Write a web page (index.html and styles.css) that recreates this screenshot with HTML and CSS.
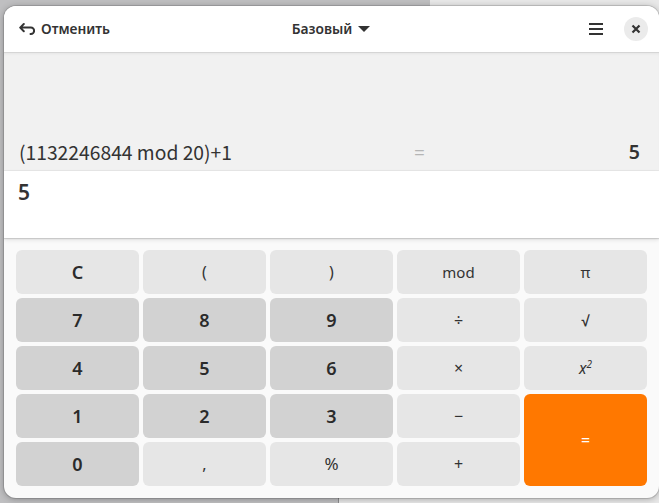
FILE: index.html
```
<!DOCTYPE html>
<html lang="ru">
<head>
<meta charset="utf-8">
<title>Калькулятор</title>
<link rel="stylesheet" href="styles.css">
</head>
<body>
<main class="window">
  <header class="header">
    <button class="undo">
      <svg width="16" height="14" viewBox="0 0 16 14"><path d="M4.8 2 1.2 5.6l3.6 3.6M1.8 5.6h10.1a3 3 0 0 1 0 6.4H11.5" fill="none" stroke="currentColor" stroke-width="2" stroke-linecap="round" stroke-linejoin="round"/></svg>
      <span>Отменить</span>
    </button>
    <button class="mode"><span>Базовый</span><svg width="12" height="6" viewBox="0 0 12 6"><path d="M0 0h12L6 6z" fill="currentColor"/></svg></button>
    <div class="actions">
      <svg class="menu" width="14" height="12" viewBox="0 0 14 12"><path d="M0 1h14M0 6h14M0 11h14" stroke="currentColor" stroke-width="2"/></svg>
      <button class="close"><svg width="10" height="10" viewBox="0 0 10 10"><path d="m1.5 1.5 7 7m0-7-7 7" stroke="currentColor" stroke-width="2.2"/></svg></button>
    </div>
  </header>
  <section class="history">
    <span class="expression">(1132246844 mod 20)+1</span>
    <span class="equals">=</span>
    <span class="answer">5</span>
  </section>
  <section class="entry">5</section>
  <section class="keys">
    <button class="key bold">C</button><button class="key paren">(</button><button class="key paren">)</button><button class="key">mod</button><button class="key">π</button>
    <button class="key digit">7</button><button class="key digit">8</button><button class="key digit">9</button><button class="key operator">÷</button><button class="key root">√</button>
    <button class="key digit">4</button><button class="key digit">5</button><button class="key digit">6</button><button class="key operator">×</button><button class="key power"><span>x<sup>2</sup></span></button>
    <button class="key digit">1</button><button class="key digit">2</button><button class="key digit">3</button><button class="key operator">−</button><button class="key result">=</button>
    <button class="key digit">0</button><button class="key paren">,</button><button class="key percent">%</button><button class="key operator">+</button>
  </section>
</main>
</body>
</html>
```
FILE: styles.css
```
* { box-sizing: border-box; }
body {
  margin: 0;
  height: 503px;
  padding: 6px 0 5px 4px;
  overflow: hidden;
  background:
    linear-gradient(#bfbfc1, #bfbfc1) 0 0 / 430px 250px no-repeat,
    linear-gradient(#bfbfc1, #bfbfc1) 0 250px / 338px 253px no-repeat,
    linear-gradient(#8c8c8e, #8c8c8e) 338px 250px / 1px 253px no-repeat,
    #e8e8e8;
  font-family: "Noto Sans", sans-serif;
  color: #333;
}
button { border: 0; padding: 0; margin: 0; background: none; font: inherit; color: inherit; }
svg { display: block; }
.window {
  width: 655px;
  height: 492px;
  display: flex;
  flex-direction: column;
  border-radius: 12px;
  background: #fafafa;
  overflow: hidden;
  box-shadow: 0 0 0 1px rgba(0,0,0,.12), 0 1px 7px rgba(0,0,0,.3);
}
.header {
  height: 47px;
  flex: none;
  display: grid;
  grid-template-columns: 1fr auto 1fr;
  align-items: center;
  padding: 0 11px 1px 15px;
  background: #fff;
  border-bottom: 1px solid #d5d5d5;
  font-size: 13.8px;
  line-height: 20px;
  font-weight: 600;
}
.undo, .mode, .actions { display: flex; align-items: center; }
.undo { gap: 6px; }
.mode { gap: 6px; margin-left: -5px; }
.actions { justify-content: flex-end; gap: 21px; }
.close { width: 24px; height: 24px; display: grid; place-items: center; border-radius: 50%; background: #ebebeb; }
.history {
  height: 118px;
  flex: none;
  display: grid;
  grid-template-columns: 395px 1fr auto;
  align-items: end;
  padding: 0 19px 5px 15px;
  background: #f1f1f1;
  border-bottom: 1px solid #e7e7e7;
  box-shadow: inset 0 2px 3px -1px rgba(0,0,0,.05);
  font-size: 19px;
  line-height: 26px;
}
.expression { font-family: "Noto Sans CJK SC", "Noto Sans", sans-serif; font-size: 19.3px; }
.equals { color: #b5b5b5; transform: translateY(1px); }
.answer { font-size: 19.5px; font-weight: 600; }
.entry {
  height: 67px;
  flex: none;
  padding: 8px 14px;
  background: #fff;
  box-shadow: 0 1px 1px rgba(0,0,0,.13), 0 2px 4px rgba(0,0,0,.1);
  font-size: 21px;
  font-weight: 600;
  line-height: 27px;
}
.keys {
  display: grid;
  grid-template-columns: repeat(5, 123px);
  grid-template-rows: repeat(5, 44px);
  gap: 4px;
  padding: 12px;
}
.key { border-radius: 6px; background: #e6e6e6; font-size: 15px; line-height: 20px; }
.bold, .digit { font-size: 18px; font-weight: 600; line-height: 24px; color: #2b2b2b; }
.digit { background: #d2d2d2; }
.paren { font-size: 16px; }
.operator { font-size: 16px; }
.percent { font-size: 17px; }
.root { font-size: 15px; font-weight: 700; }
.power { font-size: 15.5px; font-style: italic; }
.power sup { font-size: 10px; line-height: 0; vertical-align: 6px; }
.result { grid-column: 5; grid-row: 4 / span 2; background: #ff7800; color: #fff; font-size: 16px; }
```
